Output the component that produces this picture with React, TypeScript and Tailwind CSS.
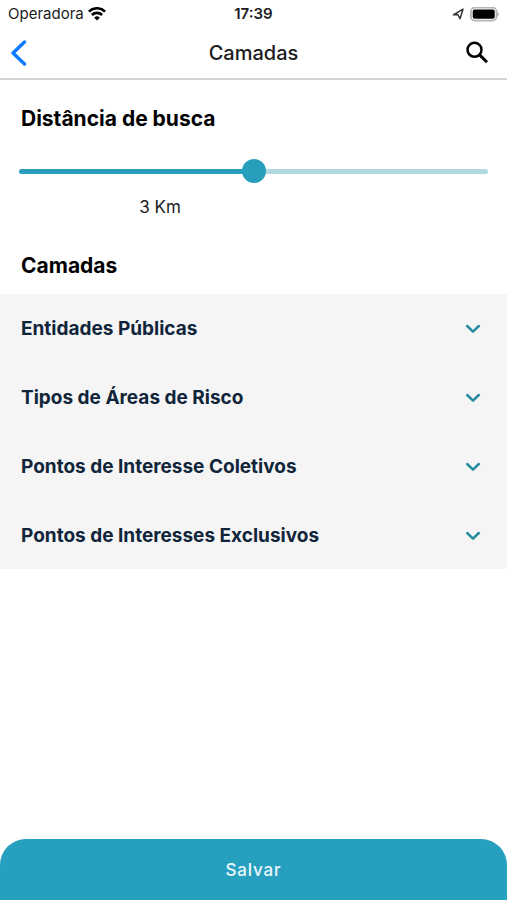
import { useState } from "react";

const layers = [
  { name: "Entidades Públicas", items: ["Escolas", "Hospitais"] },
  { name: "Tipos de Áreas de Risco", items: ["Alagamento", "Deslizamento"] },
  { name: "Pontos de Interesse Coletivos", items: ["Praças", "Parques"] },
  { name: "Pontos de Interesses Exclusivos", items: ["Casa", "Trabalho"] },
];

function StatusBar() {
  return (
    <div className="grid h-7 grid-cols-3 items-center px-2 text-[15px] leading-5 text-[#1c1c1e]">
      <div className="flex items-center gap-1">
        <span>Operadora</span>
        <svg className="h-[14px] w-[18px]" viewBox="0 0 18 14" fill="none" stroke="#000" strokeWidth="2.6">
          <path d="M0.9 4.6a11.5 11.5 0 0 1 16.2 0" />
          <path d="M3.9 8a7.3 7.3 0 0 1 10.2 0" />
          <path d="M9 13.4 6.2 10.7a4 4 0 0 1 5.6 0Z" fill="#000" stroke="none" />
        </svg>
      </div>
      <span className="text-center font-semibold">17:39</span>
      <div className="flex items-center justify-end gap-[6px]">
        <svg className="h-3 w-3" viewBox="0 0 12 12" fill="none" stroke="#333" strokeWidth="1.5" strokeLinejoin="round">
          <path d="M11 1.2 1.4 6.8l4.4-.3 2.2 4.2Z" />
        </svg>
        <svg className="h-[15px] w-[29px]" viewBox="0 0 29 15">
          <rect x="0.9" y="0.6" width="25.6" height="13" rx="4" fill="#fff" stroke="#b5b5b5" strokeWidth="1.8" />
          <rect x="2.7" y="2.4" width="22" height="9.4" rx="2" fill="#000" />
          <path d="M27 4.8c2.4.8 2.4 4 0 4.8Z" fill="#b5b5b5" />
        </svg>
      </div>
    </div>
  );
}

function Header() {
  return (
    <header className="grid h-[52px] grid-cols-3 items-center border-b-2 border-[#d4d4d4] px-2">
      <button type="button" aria-label="Voltar" className="justify-self-start">
        <svg className="h-[26px] w-[20px]" viewBox="0 0 20 26" fill="none" stroke="#0a7aff" strokeWidth="3.4" strokeLinecap="round" strokeLinejoin="round">
          <path d="M16.5 2 5 13l11.5 11" />
        </svg>
      </button>
      <h1 className="text-center text-[20px] font-medium leading-6 text-[#1c1c1e]">Camadas</h1>
      <button type="button" aria-label="Buscar" className="justify-self-end pr-2">
        <svg className="h-7 w-7" viewBox="0 0 28 28" fill="none" stroke="#000">
          <circle cx="11.5" cy="10.8" r="7" strokeWidth="2.5" />
          <path d="m16.6 15.9 7.4 7.4" strokeWidth="3" />
        </svg>
      </button>
    </header>
  );
}

function Distance() {
  const [distance, setDistance] = useState(3);
  const filled = ((distance - 1) / 4) * 100;
  return (
    <section className="flex flex-col pt-[25px]">
      <label htmlFor="distance" className="px-[21px] text-[21px] font-bold leading-7">
        Distância de busca
      </label>
      <div className="mx-[19px] mt-[26px] flex h-6 items-center">
        <input
          id="distance"
          type="range"
          min={1}
          max={5}
          value={distance}
          onChange={(event) => setDistance(Number(event.target.value))}
          style={{ backgroundImage: `linear-gradient(to right, #279fbc ${filled}%, #b3d9e0 ${filled}%)` }}
          className="h-[5px] w-full cursor-pointer appearance-none rounded-full [&::-webkit-slider-thumb]:size-6 [&::-webkit-slider-thumb]:appearance-none [&::-webkit-slider-thumb]:rounded-full [&::-webkit-slider-thumb]:bg-[#279fbc]"
        />
      </div>
      <output htmlFor="distance" className="mt-3 w-[320px] text-center text-[17px] leading-6 text-[#1c1c1e]">
        {distance} Km
      </output>
    </section>
  );
}

function Layers() {
  const [open, setOpen] = useState<string | null>(null);
  return (
    <section className="pt-[33px]">
      <h2 className="px-[21px] text-[21px] font-bold leading-7">Camadas</h2>
      <ul className="mt-[14px] flex flex-col gap-px bg-[#f5f5f5] text-[#10253a]">
        {layers.map((layer) => (
          <li key={layer.name}>
            <button
              type="button"
              aria-expanded={open === layer.name}
              onClick={() => setOpen(open === layer.name ? null : layer.name)}
              className="flex w-full items-center justify-between pb-[21px] pl-[21px] pr-[26px] pt-[23px] text-left text-[19px] font-bold leading-6"
            >
              {layer.name}
              <svg className="h-4 w-4" viewBox="0 0 16 16" fill="none" stroke="#268da0" strokeWidth="2.5" strokeLinecap="round" strokeLinejoin="round">
                <path d="m2.2 5 5.8 5.6L13.8 5" />
              </svg>
            </button>
            {open === layer.name && (
              <ul className="px-8 pb-4 text-[17px] leading-8">
                {layer.items.map((item) => (
                  <li key={item}>{item}</li>
                ))}
              </ul>
            )}
          </li>
        ))}
      </ul>
    </section>
  );
}

export default function App() {
  return (
    <div className="flex min-h-screen flex-col bg-white font-[Inter,'Liberation_Sans',sans-serif] text-black">
      <StatusBar />
      <Header />
      <main className="flex-1">
        <Distance />
        <Layers />
      </main>
      <button type="button" className="h-[61px] w-full rounded-t-[26px] bg-[#279fbe] text-[17px] font-medium leading-6 tracking-wider text-[#eaf8fb]">
        Salvar
      </button>
    </div>
  );
}
